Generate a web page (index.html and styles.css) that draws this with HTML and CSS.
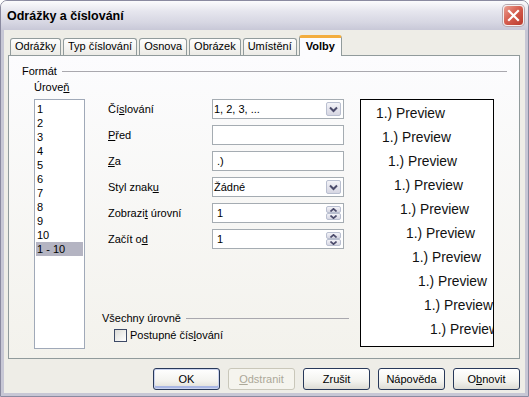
FILE: index.html
```html
<!DOCTYPE html>
<html lang="cs">
<head>
    <meta charset="UTF-8">
    <title>Odrážky a číslování</title>
    <link rel="stylesheet" href="styles.css">
</head>
<body>
    <div class="window">
        <div class="titlebar">
            <span class="title">Odrážky a číslování</span>
            <span class="close">
                <svg width="13" height="13" viewBox="0 0 13 13"><path d="M2 2 L11 11 M11 2 L2 11" stroke="#fff" stroke-width="2.2" stroke-linecap="square"/></svg>
            </span>
        </div>
        <div class="client">
            <div class="tabs">
                <div class="tab">Odrážky</div>
                <div class="tab">Typ číslování</div>
                <div class="tab">Osnova</div>
                <div class="tab">Obrázek</div>
                <div class="tab">Umístění</div>
                <div class="tab active">Volby</div>
            </div>
            <div class="panel">
                <div class="group-title">Formát</div>
                <div class="format">
                    <div class="level-col">
                        <div class="caption">Úrove<u>ň</u></div>
                        <ul class="levels">
                            <li>1</li>
                            <li>2</li>
                            <li>3</li>
                            <li>4</li>
                            <li>5</li>
                            <li>6</li>
                            <li>7</li>
                            <li>8</li>
                            <li>9</li>
                            <li>10</li>
                            <li class="sel">1 - 10</li>
                        </ul>
                    </div>
                    <div class="form-col">
                        <div class="fields">
                            <span class="lbl">Čí<u>s</u>lování</span>
                            <div class="field select">1, 2, 3, ...<span class="arrow"><svg width="9" height="7" viewBox="0 0 9 7"><path d="M1 1.5 L4.5 5 L8 1.5" fill="none" stroke="#4b4b6b" stroke-width="2"/></svg></span></div>

                            <span class="lbl"><u>P</u>řed</span>
                            <div class="field input"></div>

                            <span class="lbl"><u>Z</u>a</span>
                            <div class="field input">.)</div>

                            <span class="lbl">Styl znak<u>u</u></span>
                            <div class="field select">Žádné<span class="arrow"><svg width="9" height="7" viewBox="0 0 9 7"><path d="M1 1.5 L4.5 5 L8 1.5" fill="none" stroke="#4b4b6b" stroke-width="2"/></svg></span></div>

                            <span class="lbl">Zobrazi<u>t</u> úrovní</span>
                            <div class="field input">1<span class="spin"><span class="half"><svg width="7" height="4" viewBox="0 0 7 4"><path d="M0.5 3.5 L3.5 0.8 L6.5 3.5" fill="none" stroke="#4b4b6b" stroke-width="1.6"/></svg></span><span class="half"><svg width="7" height="4" viewBox="0 0 7 4"><path d="M0.5 0.5 L3.5 3.2 L6.5 0.5" fill="none" stroke="#4b4b6b" stroke-width="1.6"/></svg></span></span></div>

                            <span class="lbl">Začít o<u>d</u></span>
                            <div class="field input">1<span class="spin"><span class="half"><svg width="7" height="4" viewBox="0 0 7 4"><path d="M0.5 3.5 L3.5 0.8 L6.5 3.5" fill="none" stroke="#4b4b6b" stroke-width="1.6"/></svg></span><span class="half"><svg width="7" height="4" viewBox="0 0 7 4"><path d="M0.5 0.5 L3.5 3.2 L6.5 0.5" fill="none" stroke="#4b4b6b" stroke-width="1.6"/></svg></span></span></div>
                        </div>
                        <div class="all-levels">
                            <div class="group-title">Všechny úrovně</div>
                            <label class="check"><span class="box"></span>Postupné čís<u>l</u>ování</label>
                        </div>
                    </div>
                    <div class="preview">
                        <div style="--lvl:0">1.) Preview</div>
                        <div style="--lvl:1">1.) Preview</div>
                        <div style="--lvl:2">1.) Preview</div>
                        <div style="--lvl:3">1.) Preview</div>
                        <div style="--lvl:4">1.) Preview</div>
                        <div style="--lvl:5">1.) Preview</div>
                        <div style="--lvl:6">1.) Preview</div>
                        <div style="--lvl:7">1.) Preview</div>
                        <div style="--lvl:8">1.) Preview</div>
                        <div style="--lvl:9">1.) Preview</div>
                    </div>
                </div>
            </div>
            <div class="buttons">
                <button class="btn default">OK</button>
                <button class="btn disabled"><u>O</u>dstranit</button>
                <button class="btn">Zrušit</button>
                <button class="btn">Nápověda</button>
                <button class="btn">O<u>b</u>novit</button>
            </div>
        </div>
    </div>
</body>
</html>
```

FILE: styles.css
```css
* {
    box-sizing: border-box;
}
body {
    margin: 0;
    font-family: "Liberation Sans", Arial, sans-serif;
    font-size: 11px;
    color: #000;
    background: #fff;
}
u {
    text-decoration-thickness: 1px;
    text-underline-offset: 1px;
}
.window {
    width: 529px;
    height: 397px;
    display: flex;
    flex-direction: column;
    border: 1px solid #8a8aa0;
    border-radius: 7px 7px 0 0;
    background: #eeede7;
    overflow: hidden;
}
.titlebar {
    height: 29px;
    flex: none;
    display: flex;
    align-items: center;
    padding: 0 4px 0 6px;
    background: linear-gradient(#fbfbfd 0%, #e6e6ee 35%, #d6d6e2 75%, #c8c8d7 100%);
    font-size: 12.5px;
    font-weight: bold;
}
.close {
    margin-left: auto;
    width: 21px;
    height: 21px;
    display: flex;
    align-items: center;
    justify-content: center;
    border: 1px solid #f4f0f0;
    border-radius: 4px;
    background: linear-gradient(135deg, #eba092 0%, #d65f50 45%, #bb3a2c 100%);
    box-shadow: 0 0 0 1px #b8a8ae;
}
.client {
    flex: 1;
    display: flex;
    flex-direction: column;
    padding: 4px 5px 0 4px;
    border: solid #c7c7d5;
    border-width: 0 3px 3px;
}
.tabs {
    height: 21px;
    display: flex;
    align-items: flex-end;
    gap: 2px;
    padding-left: 2px;
    position: relative;
    z-index: 1;
}
.tab {
    height: 17px;
    padding: 0 4px;
    line-height: 15px;
    border: 1px solid #919b9c;
    border-bottom: 0;
    border-radius: 3px 3px 0 0;
    background: linear-gradient(#fefefe, #ecebe6);
}
.tab.active {
    height: 21px;
    margin-bottom: -1px;
    padding: 1px 6px 0;
    font-weight: bold;
    border-top: 3px solid #f3ad3e;
    background: #fcfcfe;
}
.panel {
    border: 1px solid #919b9c;
    background: linear-gradient(#fcfcfe, #f3f2ec);
    padding: 9px 12px 9px 13px;
}
.group-title {
    display: flex;
    align-items: center;
    gap: 5px;
    line-height: 13px;
}
.group-title::after {
    content: "";
    flex: 1;
    border-top: 1px solid #a9a8ae;
}
.format {
    display: flex;
    margin-top: 3px;
    padding-left: 12px;
}
.level-col {
    width: 51px;
}
.caption {
    line-height: 13px;
    margin-bottom: 5px;
}
.levels {
    height: 250px;
    margin: 0;
    padding: 2px 1px;
    list-style: none;
    border: 1px solid #a0a9b8;
    background: #fff;
}
.levels li {
    height: 14px;
    line-height: 14px;
    padding-left: 1px;
}
.levels li.sel {
    background: #b4b4c2;
}
.form-col {
    width: 247px;
    margin-left: 17px;
    padding-top: 18px;
    display: flex;
    flex-direction: column;
}
.fields {
    display: grid;
    grid-template-columns: 104px 132px;
    grid-auto-rows: 20px;
    row-gap: 6px;
    padding-left: 6px;
}
.lbl {
    line-height: 20px;
}
.field {
    display: flex;
    align-items: center;
    border: 1px solid #a5acb2;
    background: #fff;
    padding: 0 2px 0 4px;
}
.field.select {
    padding-left: 1px;
}
.arrow {
    margin-left: auto;
    width: 15px;
    height: 14px;
    display: flex;
    align-items: center;
    justify-content: center;
    border: 1px solid #b9bfd0;
    border-radius: 2px;
    background: linear-gradient(#f3f3f8, #d6d6e2);
}
.spin {
    margin-left: auto;
    width: 15px;
    height: 14px;
    display: flex;
    flex-direction: column;
}
.spin .half {
    flex: 1;
    display: flex;
    align-items: center;
    justify-content: center;
    border: 1px solid #b9bfd0;
    border-radius: 2px;
    background: linear-gradient(#f3f3f8, #d6d6e2);
}
.all-levels {
    margin-top: auto;
    padding-bottom: 7px;
}
.check {
    display: flex;
    align-items: center;
    margin-top: 4px;
    padding-left: 12px;
    line-height: 13px;
}
.check .box {
    width: 13px;
    height: 13px;
    margin-right: 3px;
    border: 1px solid #3d4a66;
    background: linear-gradient(135deg, #dcdcd7, #fff);
}
.preview {
    width: 134px;
    height: 248px;
    margin-top: 18px;
    margin-left: 11px;
    padding-top: 2px;
    border: 1px solid #000;
    background: #fff;
    overflow: hidden;
    font-size: 13.8px;
    color: #111;
}
.preview div {
    line-height: 24px;
    white-space: nowrap;
    padding-left: calc(15px + var(--lvl) * 6px);
}
.buttons {
    display: flex;
    justify-content: flex-end;
    gap: 8px;
    margin-top: 9px;
}
.btn {
    width: 67px;
    height: 22px;
    padding: 0;
    font: inherit;
    color: #000;
    border: 1px solid #28395a;
    border-radius: 3px;
    background: linear-gradient(#ffffff, #f3f3ef 60%, #dddcd5);
}
.btn.default {
    box-shadow: inset 0 0 0 1px #cad3ee, inset 0 -2px 0 1px #a9b7e4;
}
.btn.disabled {
    color: #aca899;
    border-color: #c9c7ba;
    background: #f5f4ee;
}
```
